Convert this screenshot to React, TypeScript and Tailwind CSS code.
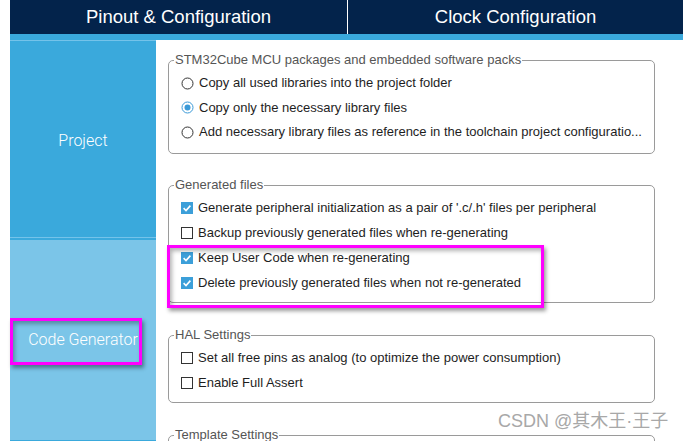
import React from "react"

const font = { fontFamily: '"Liberation Sans", Arial, sans-serif' }

function Radio({ checked }: { checked?: boolean }) {
  return (
    <svg width="13" height="13" viewBox="0 0 13 13" className="shrink-0">
      <circle cx="6.5" cy="6.5" r="5.5" fill="#fff" stroke={checked ? "#3b9ad8" : "#333"} strokeWidth="1" />
      {checked && <circle cx="6.5" cy="6.5" r="3" fill="#3b9ad8" />}
    </svg>
  )
}

function Check({ checked }: { checked?: boolean }) {
  return checked ? (
    <svg width="12" height="12" viewBox="0 0 12 12" className="shrink-0">
      <rect x="0" y="0" width="12" height="12" fill="#3c9fd9" />
      <path d="M2.6 6.2 L5 8.5 L9.4 3.6" fill="none" stroke="#fff" strokeWidth="1.6" />
    </svg>
  ) : (
    <svg width="12" height="12" viewBox="0 0 12 12" className="shrink-0">
      <rect x="0.5" y="0.5" width="11" height="11" fill="#fff" stroke="#333" strokeWidth="1" />
    </svg>
  )
}

function Row({ children, h, control }: { children: React.ReactNode; h: string; control: React.ReactNode }) {
  return (
    <div className={`flex items-center gap-[5px] pl-[12px] ${h}`}>
      {control}
      <span className="text-[13px] leading-[16px] text-[#1e1e1e] whitespace-nowrap">{children}</span>
    </div>
  )
}

function Group({ title, children, className }: { title: string; children?: React.ReactNode; className?: string }) {
  return (
    <fieldset className={`border border-[#9a9a9a] rounded-[5px] ${className ?? ""}`}>
      <legend className="ml-[5px] px-[1px] text-[13px] leading-[16px] text-[#555]">{title}</legend>
      {children}
    </fieldset>
  )
}

export default function App() {
  return (
    <div className="relative w-[683px] h-[441px] overflow-hidden bg-white pl-[10px] flex flex-col" style={font}>
      <div className="h-[34px] bg-[#03234b] flex text-white text-[18.5px]">
        <div className="w-[338px] border-r border-white flex items-center justify-center">Pinout &amp; Configuration</div>
        <div className="flex-1 flex items-center justify-center">Clock Configuration</div>
      </div>
      <div className="h-[6px] bg-[#3aa9dc]" />

      <div className="flex flex-1 min-h-0">
        <div
          className="w-[146px] flex flex-col text-white text-[16px] font-light"
          style={{ fontFamily: 'Roboto, "Liberation Sans", sans-serif' }}
        >
          <div className="h-[198px] bg-[#3aa9dc] border-t border-[#74c3ea] border-b pt-[3px] flex items-center justify-center">
            Project
          </div>
          <div className="flex-1 bg-[#7bc5e8] border-t-2 border-[#3aa9dc] border-b flex items-center justify-center">
            Code Generator
          </div>
        </div>

        <div className="flex-1 pl-[12px] pr-[28px] pt-[12px] flex flex-col">
          <Group title="STM32Cube MCU packages and embedded software packs" className="pt-[3px] pb-[8px]">
            <Row h="h-[24.5px]" control={<Radio />}>Copy all used libraries into the project folder</Row>
            <Row h="h-[24.5px]" control={<Radio checked />}>Copy only the necessary library files</Row>
            <Row h="h-[24.5px]" control={<Radio />}>
              Add necessary library files as reference in the toolchain project configuratio...
            </Row>
          </Group>

          <Group title="Generated files" className="mt-[23.5px] pt-[2.5px] pb-[6.5px]">
            <Row h="h-[25px]" control={<Check checked />}>
              Generate peripheral initialization as a pair of '.c/.h' files per peripheral
            </Row>
            <Row h="h-[25px]" control={<Check />}>Backup previously generated files when re-generating</Row>
            <Row h="h-[25px]" control={<Check checked />}>Keep User Code when re-generating</Row>
            <Row h="h-[25px]" control={<Check checked />}>Delete previously generated files when not re-generated</Row>
          </Group>

          <Group title="HAL Settings" className="mt-[24px] pt-[2.5px] pb-[6.5px]">
            <Row h="h-[25px]" control={<Check />}>
              Set all free pins as analog (to optimize the power consumption)
            </Row>
            <Row h="h-[25px]" control={<Check />}>Enable Full Assert</Row>
          </Group>

          <Group title="Template Settings" className="mt-[24px] h-[80px] shrink-0" />
        </div>
      </div>

      {/* annotation boxes */}
      <div className="absolute left-[167px] top-[245px] w-[377px] h-[63px] border-[3px] border-[#ff00ff] shadow-[2px_3px_4px_rgba(0,0,0,0.4),inset_2px_3px_4px_rgba(0,0,0,0.3)]" />
      <div className="absolute left-[10px] top-[318px] w-[132px] h-[47px] border-[3px] border-[#ff00ff] shadow-[2px_3px_4px_rgba(0,0,0,0.4),inset_2px_3px_4px_rgba(0,0,0,0.3)]" />

      <div
        className="absolute left-[498px] top-[409px] text-[18px] leading-[24px] text-[#a8a8a8] whitespace-nowrap"
        style={{ fontFamily: '"Liberation Sans", "Noto Sans CJK SC", sans-serif' }}
      >
        CSDN @其木王·王子
      </div>
    </div>
  )
}
